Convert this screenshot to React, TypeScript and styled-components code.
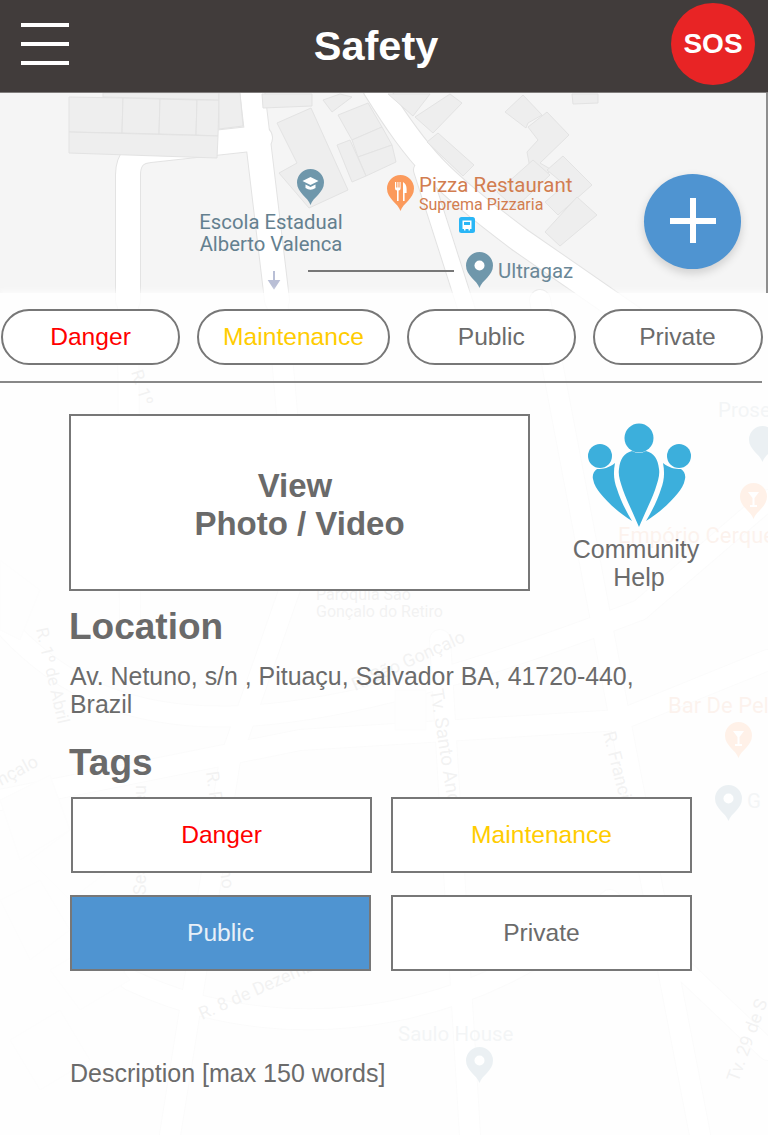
import styled, { createGlobalStyle } from "styled-components";

const GlobalStyle = createGlobalStyle`
  html, body {
    margin: 0;
    padding: 0;
    background: #fff;
  }
  * {
    box-sizing: border-box;
  }
`;

const Page = styled.div`
  position: relative;
  width: 768px;
  height: 1135px;
  overflow: hidden;
  background: #f5f5f5;
  font-family: "Liberation Sans", Arial, sans-serif;
  color: #6b6b6b;
`;

const MapCanvas = styled.svg`
  position: absolute;
  top: 0;
  left: 0;
  width: 768px;
  height: 1135px;
`;

const Content = styled.div`
  position: relative;
  display: flex;
  flex-direction: column;
  height: 100%;
`;

const Header = styled.header`
  display: flex;
  align-items: center;
  justify-content: space-between;
  height: 93px;
  padding: 0 13px 4px 21px;
  background: #413c3b;
  border-bottom: 1px solid #807d7c;
`;

const Burger = styled.div`
  display: flex;
  flex-direction: column;
  gap: 15px;
  width: 48px;
  span {
    height: 4px;
    background: #fff;
  }
`;

const Title = styled.h1`
  flex: 1;
  margin: 0;
  padding: 3px 0 0 12px;
  font-size: 41.5px;
  line-height: 48px;
  font-weight: 700;
  color: #fff;
  text-align: center;
`;

const SosButton = styled.div`
  display: flex;
  align-items: center;
  justify-content: center;
  width: 84px;
  height: 82px;
  border-radius: 50%;
  background: #e82425;
  color: #fff;
  font-size: 28px;
  font-weight: 700;
`;

const MapArea = styled.div`
  position: relative;
  flex: 0 0 200px;
  border-right: 2px solid #8e8e8e;
`;

const AddButton = styled.div`
  position: absolute;
  top: 81px;
  left: 644px;
  width: 97px;
  height: 95px;
  border-radius: 50%;
  background: #4f94d1;
  box-shadow: 0 4px 10px rgba(0, 0, 0, 0.16);
  &::before,
  &::after {
    content: "";
    position: absolute;
    background: #fff;
  }
  &::before {
    left: 26px;
    top: 44px;
    width: 46px;
    height: 6px;
  }
  &::after {
    left: 46px;
    top: 24px;
    width: 6px;
    height: 45px;
  }
`;

const Sheet = styled.section`
  flex: 1;
  background: rgba(255, 255, 255, 0.86);
  box-shadow: 0 -3px 5px rgba(255, 255, 255, 0.6);
`;

const ChipRow = styled.div`
  display: grid;
  grid-template-columns: 179px 193px 168.5px 170px;
  column-gap: 17px;
  width: 762px;
  height: 74px;
  margin-top: 16px;
  padding-left: 1px;
  border-bottom: 2px solid #888;
`;

const Chip = styled.div<{ $color: string }>`
  display: flex;
  align-items: center;
  justify-content: center;
  height: 56px;
  border: 2px solid #777;
  border-radius: 28px;
  background: #fff;
  font-size: 24.6px;
  color: ${(p) => p.$color};
`;

const Body = styled.div`
  padding-left: 69px;
`;

const TopRow = styled.div`
  display: flex;
  margin-top: 31px;
`;

const PhotoBox = styled.div`
  display: flex;
  flex-direction: column;
  align-items: center;
  justify-content: center;
  width: 461px;
  height: 177px;
  padding-top: 4px;
  border: 2px solid #777;
  background: #fff;
  font-size: 33px;
  line-height: 38px;
  font-weight: 700;
  color: #6a6a6a;
`;

const PhotoFirstLine = styled.div`
  padding-right: 9px;
`;

const Community = styled.div`
  display: flex;
  flex-direction: column;
  align-items: center;
  width: 132px;
  margin-left: 43px;
  padding-top: 9px;
  svg {
    display: block;
  }
`;

const CommunityLabel = styled.div`
  display: flex;
  flex-direction: column;
  align-items: center;
  margin-top: 8px;
  font-size: 25px;
  line-height: 28px;
  color: #6b6b6b;
`;

const CommunityWord = styled.div`
  padding-right: 6px;
`;

const Heading = styled.h2<{ $top: number }>`
  margin: ${(p) => p.$top}px 0 0;
  font-size: 37px;
  line-height: 44px;
  font-weight: 700;
  color: #6a6a6a;
`;

const Address = styled.p`
  width: 590px;
  margin: 13px 0 0;
  padding-left: 1px;
  font-size: 24.9px;
  line-height: 28px;
  color: #6b6b6b;
`;

const TagGrid = styled.div`
  display: grid;
  grid-template-columns: 301px 301px;
  grid-auto-rows: 76px;
  gap: 22px 19px;
  margin-top: 12px;
  padding-left: 2px;
`;

const Tag = styled.div<{ $color: string; $active?: boolean }>`
  display: flex;
  align-items: center;
  justify-content: center;
  margin: ${(p) => (p.$active ? "0 1px 0 -1px" : "0")};
  border: 2px solid #777;
  background: ${(p) => (p.$active ? "#4f94d1" : "#fff")};
  font-size: 24.6px;
  color: ${(p) => p.$color};
`;

const Description = styled.div`
  margin-top: 88px;
  padding-left: 1px;
  font-size: 25px;
  line-height: 28px;
  color: #6b6b6b;
`;

const pinPath = "M13.5 36C11 28 0 24 0 13.5A13.5 13.5 0 0 1 27 13.5C27 24 16 28 13.5 36Z";

function Buildings() {
  const shapes = [
    "69,97 123,98 122,133 69,132",
    "123,98 160,99 159,134 122,133",
    "160,99 197,100 196,135 159,134",
    "197,100 219,100 218,136 196,135",
    "69,132 218,136 217,158 69,153",
    "103,93 219,93 219,100 103,97",
    "219,93 240,93 243,126 219,129",
    "262,94 312,94 312,106 263,108",
    "277,123 311,108 348,190 309,208 279,173 297,163",
    "323,100 340,94 352,97 332,112",
    "338,115 368,103 382,127 352,140",
    "352,140 382,127 392,145 358,157",
    "358,157 392,145 396,162 366,176",
    "337,145 350,140 366,176 352,182",
    "388,94 430,94 413,116",
    "415,117 450,94 462,103 433,133",
    "427,142 438,133 474,165 463,176",
    "505,112 523,95 542,115 528,123 526,128",
    "528,127 547,112 569,135 540,163 552,170 533,184 527,152 538,140",
    "497,192 533,160 550,175 515,208",
    "547,170 563,156 592,185 558,215 545,202 565,185",
    "545,232 577,197 597,215 560,246",
    "572,94 598,94 598,103 573,104",
  ];
  const faint = [
    "0,560 40,590 20,640 0,630",
    "30,860 70,830 110,870 70,900",
    "0,900 40,880 70,930 30,960",
    "50,970 100,940 130,980 80,1010",
    "10,1040 60,1010 90,1060 40,1090",
    "395,690 426,690 426,730 395,730",
    "0,800 50,775 70,830 20,860",
  ];
  return (
    <g>
      <g fill="#eeeeee" stroke="#e3e3e3" strokeWidth="1">
        {shapes.map((s) => (
          <polygon key={s} points={s} />
        ))}
      </g>
      <g fill="#f3f3f3" stroke="#ececec" strokeWidth="1">
        {faint.map((s) => (
          <polygon key={s} points={s} />
        ))}
      </g>
    </g>
  );
}

function Roads() {
  const upper = [
    "M252 90 L277 300",
    "M128 300 L128 175 Q128 152 150 150 L260 138",
    "M375 88 C420 160 440 180 520 240 L650 330",
  ];
  const lower = [
    "M277 300 L300 560 L230 760 L170 1135",
    "M0 620 C120 760 300 740 640 610",
    "M440 640 L470 1135",
    "M640 610 L768 500",
    "M0 800 L300 740 L620 720 L768 660",
    "M130 980 C300 1060 500 1010 610 900 L768 1050",
    "M620 720 L700 1135",
    "M128 300 L130 620",
    "M540 300 L620 720",
  ];
  return (
    <g fill="none" strokeLinejoin="round" strokeLinecap="round">
      <g stroke="#e3e3e3" strokeWidth="26">
        {lower.map((d) => (
          <path key={d} d={d} strokeWidth="22" />
        ))}
        {upper.map((d) => (
          <path key={d} d={d} />
        ))}
        <path d="M422 170 L470 320" strokeWidth="18" />
      </g>
      <g stroke="#fff" strokeWidth="24">
        {lower.map((d) => (
          <path key={d} d={d} strokeWidth="20" />
        ))}
        {upper.map((d) => (
          <path key={d} d={d} />
        ))}
        <path d="M422 170 L470 320" strokeWidth="16" />
      </g>
    </g>
  );
}

function Labels() {
  return (
    <g fontFamily="Roboto, sans-serif">
      <g fill="#64808f" fontSize="20.3" textAnchor="middle">
        <text x="271" y="229">Escola Estadual</text>
        <text x="271" y="251">Alberto Valenca</text>
      </g>
      <text x="419" y="192" fontSize="20.5" fill="#d27d50">Pizza Restaurant</text>
      <text x="419" y="210" fontSize="16" fill="#d27d50">Suprema Pizzaria</text>
      <text x="498" y="278" fontSize="20.4" fill="#6a8797">Ultragaz</text>

      <g fontSize="20.5" fill="#a8b4bc">
        <text x="718" y="417">Prose</text>
        <text x="747" y="808">G</text>
        <text x="398" y="1041">Saulo House</text>
      </g>
      <g fontSize="22" fill="#e8a582">
        <text x="618" y="543">Empório Cerque</text>
        <text x="668" y="713">Bar De Pele</text>
      </g>
      <g fontSize="17" fill="#a0a0a0">
        <text x="316" y="600" fontSize="16">Paroquia São</text>
        <text x="316" y="617" fontSize="16">Gonçalo do Retiro</text>
        <text x="355" y="691" transform="rotate(-24 355 691)" fontSize="18">R. São Gonçalo</text>
        <text x="1" y="786" transform="rotate(-28 1 786)" fontSize="18">nçalo</text>
        <text x="131" y="372" transform="rotate(72 131 372)">R. 1º</text>
        <text x="36" y="629" transform="rotate(77 36 629)">R. 1º de Abril</text>
        <text x="430" y="690" transform="rotate(81 430 690)" fontSize="19">Tv. Santo Andrade</text>
        <text x="603" y="733" transform="rotate(76 603 733)" fontSize="18">R. Francisco</text>
        <text x="206" y="772" transform="rotate(82 206 772)" fontSize="18">R. Prof. Sabino</text>
        <text x="146" y="895" transform="rotate(-90 146 895)" fontSize="18">Sesmaria Seu</text>
        <text x="202" y="1020" transform="rotate(-24 202 1020)" fontSize="18">R. 8 de Dezembro</text>
        <text x="738" y="1083" transform="rotate(-70 738 1083)" fontSize="18">Tv. 29 de S</text>
      </g>
    </g>
  );
}

function Markers() {
  return (
    <g>
      <g transform="translate(297 169)">
        <path d={pinPath} fill="#6f97ab" />
        <path d="M5.5 12L13.5 8L21.5 12L13.5 16Z" fill="#fff" />
        <path d="M8.5 15.5V19Q13.5 22.5 18.5 19V15.5L13.5 18Z" fill="#fff" />
      </g>
      <g transform="translate(387 175)">
        <path d={pinPath} fill="#fb9a5c" />
        <path d="M8 7V13.5Q8 15.5 10 15.5V26H11.6V15.5Q13.6 15.5 13.6 13.5V7H12.6V12.5H11.4V7H10.4V12.5H9.2V7Z" fill="#fff" />
        <path d="M16 26V7Q19.6 9 19.6 14V18H17.6V26Z" fill="#fff" />
      </g>
      <rect x="459" y="217" width="16" height="16" rx="2.5" fill="#29b6f6" />
      <path d="M462.5 220.5H471.5V229H470V230.5H468.5V229H465.5V230.5H464V229H462.5Z" fill="#fff" />
      <rect x="464" y="222" width="6" height="3" fill="#29b6f6" />
      <g transform="translate(466 252)">
        <path d={pinPath} fill="#6f97ab" />
        <circle cx="13.5" cy="13.5" r="5" fill="#fff" />
      </g>
      <path d="M274 271V285M269.5 281L274 288L278.5 281Z" stroke="#b9bfd6" strokeWidth="2" fill="#b9bfd6" />
      <rect x="308" y="270" width="146" height="2" fill="#777" />

      <g transform="translate(749 426)">
        <path d={pinPath} fill="#6f97ab" />
      </g>
      <g transform="translate(740 483)">
        <path d={pinPath} fill="#fb9a5c" />
        <path d="M8 9H19L14.5 15V22H17V24H10V22H12.5V15Z" fill="#fff" />
      </g>
      <g transform="translate(725 722)">
        <path d={pinPath} fill="#fb9a5c" />
        <path d="M8 9H19L14.5 15V22H17V24H10V22H12.5V15Z" fill="#fff" />
      </g>
      <g transform="translate(715 785)">
        <path d={pinPath} fill="#6f97ab" />
        <circle cx="13.5" cy="13.5" r="5" fill="#fff" />
      </g>
      <g transform="translate(466 1047)">
        <path d={pinPath} fill="#6f97ab" />
        <circle cx="13.5" cy="13.5" r="5" fill="#fff" />
      </g>
    </g>
  );
}

function CommunityIcon() {
  const side = "M28 40C22 45 16 46 10 46C7 48 5 52 6 56C7 62 10 66 13 70C20 79 32 90 45 98C39 88 33 76 30 66C27 58 26 50 28 40Z";
  return (
    <svg width="104" height="104" viewBox="0 0 104 104" fill="#3cafdc">
      <circle cx="52" cy="15" r="14.5" />
      <circle cx="13" cy="33" r="12" />
      <circle cx="92" cy="33" r="12" />
      <path d="M52 104C47 92 40 78 36 67C33 58 31 52 32 46C33 36 37 30 45 28Q52 32 59 28C67 30 71 36 72 46C73 52 71 58 68 67C64 78 57 92 52 104Z" />
      <path d={side} />
      <path d={side} transform="translate(104 0) scale(-1 1)" />
    </svg>
  );
}

export default function App() {
  return (
    <Page>
      <GlobalStyle />
      <MapCanvas viewBox="0 0 768 1135">
        <Roads />
        <Buildings />
        <Labels />
        <Markers />
      </MapCanvas>
      <Content>
        <Header>
          <Burger>
            <span />
            <span />
            <span />
          </Burger>
          <Title>Safety</Title>
          <SosButton>SOS</SosButton>
        </Header>
        <MapArea>
          <AddButton />
        </MapArea>
        <Sheet>
          <ChipRow>
            <Chip $color="#ff0000">Danger</Chip>
            <Chip $color="#ffcc00">Maintenance</Chip>
            <Chip $color="#6b6b6b">Public</Chip>
            <Chip $color="#6b6b6b">Private</Chip>
          </ChipRow>
          <Body>
            <TopRow>
              <PhotoBox>
                <PhotoFirstLine>View</PhotoFirstLine>
                <div>Photo / Video</div>
              </PhotoBox>
              <Community>
                <CommunityIcon />
                <CommunityLabel>
                  <CommunityWord>Community</CommunityWord>
                  <div>Help</div>
                </CommunityLabel>
              </Community>
            </TopRow>
            <Heading $top={14}>Location</Heading>
            <Address>Av. Netuno, s/n , Pituaçu, Salvador BA, 41720-440, Brazil</Address>
            <Heading $top={23}>Tags</Heading>
            <TagGrid>
              <Tag $color="#ff0000">Danger</Tag>
              <Tag $color="#ffcc00">Maintenance</Tag>
              <Tag $color="#e8f0f8" $active>Public</Tag>
              <Tag $color="#6b6b6b">Private</Tag>
            </TagGrid>
            <Description>Description [max 150 words]</Description>
          </Body>
        </Sheet>
      </Content>
    </Page>
  );
}
